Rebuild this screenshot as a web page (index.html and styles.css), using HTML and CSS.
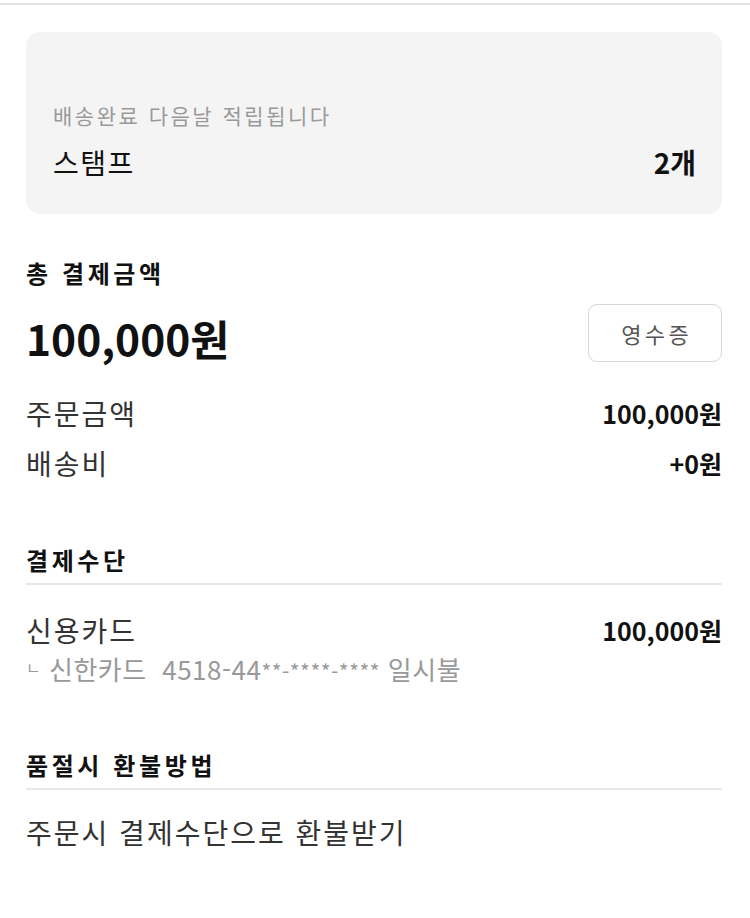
FILE: index.html
```html
<!DOCTYPE html>
<html lang="ko">
<head>
<meta charset="utf-8">
<link rel="stylesheet" href="styles.css">
</head>
<body>
<div class="topline"></div>
<main class="page">
  <section class="stamp-box">
    <p class="stamp-note">배송완료 다음날 적립됩니다</p>
    <div class="stamp-row">
      <span class="stamp-label">스탬프</span>
      <span class="stamp-count">2개</span>
    </div>
  </section>

  <section class="total">
    <h2 class="sec-title">총 결제금액</h2>
    <div class="total-row">
      <span class="total-amount">100,000원</span>
      <button class="receipt-btn">영수증</button>
    </div>
    <div class="line-row first">
      <span class="line-label">주문금액</span>
      <span class="line-value">100,000원</span>
    </div>
    <div class="line-row">
      <span class="line-label">배송비</span>
      <span class="line-value">+0원</span>
    </div>
  </section>

  <section class="block">
    <h2 class="sec-title ruled">결제수단</h2>
    <div class="line-row pay">
      <span class="line-label">신용카드</span>
      <span class="line-value">100,000원</span>
    </div>
    <p class="pay-detail"><span class="corner">ㄴ</span> 신한카드&nbsp;&nbsp;4518-44<span class="mask">**-****-****</span> 일시불</p>
  </section>

  <section class="block refund">
    <h2 class="sec-title ruled">품절시 환불방법</h2>
    <p class="refund-text">주문시 결제수단으로 환불받기</p>
  </section>
</main>
</body>
</html>
```

FILE: styles.css
```css
html, body {
  margin: 0;
  padding: 0;
  background: #fff;
}
body {
  font-family: "Noto Sans CJK KR", "Noto Sans", sans-serif;
  color: #111;
}
.topline {
  margin-top: 3px;
  height: 2px;
  background: #e2e2e2;
}
.page {
  padding: 0 28px 0 26px;
}
.stamp-box {
  margin-top: 27px;
  background: #f4f4f4;
  border-radius: 14px;
  padding: 70px 26px 35px 27px;
}
.stamp-note {
  margin: 0;
  font-size: 21px;
  line-height: 26px;
  letter-spacing: 2.5px;
  color: #999;
}
.stamp-row {
  margin-top: 17px;
  display: flex;
  justify-content: space-between;
  align-items: center;
  line-height: 34px;
}
.stamp-label {
  font-size: 28px;
  letter-spacing: 1.5px;
  color: #111;
}
.stamp-count {
  font-size: 28px;
  font-weight: 700;
}
.total {
  margin-top: 45px;
}
.sec-title {
  margin: 0;
  font-size: 24px;
  line-height: 28px;
  letter-spacing: 3.6px;
  font-weight: 700;
  color: #111;
}
.total-row {
  margin-top: 17px;
  display: flex;
  justify-content: space-between;
  align-items: flex-end;
}
.total-amount {
  font-size: 42.5px;
  line-height: 44px;
  font-weight: 700;
  margin-bottom: 2px;
}
.receipt-btn {
  width: 134px;
  height: 58px;
  border: 1px solid #d8d8d8;
  border-radius: 9px;
  background: #fff;
  font-family: inherit;
  font-size: 22px;
  letter-spacing: 3.5px;
  text-indent: 3.5px;
  color: #555;
  padding: 0;
}
.line-row {
  display: flex;
  justify-content: space-between;
  align-items: center;
  line-height: 34px;
  margin-top: 16px;
}
.line-row.first {
  margin-top: 34px;
}
.line-label {
  font-size: 28px;
  letter-spacing: 2px;
  color: #333;
}
.line-value {
  font-size: 25px;
  font-weight: 700;
  color: #111;
}
.block {
  margin-top: 66px;
}
.sec-title.ruled {
  padding-bottom: 9px;
  border-bottom: 2px solid #e8e8e8;
}
.line-row.pay {
  margin-top: 28px;
}
.pay-detail {
  margin: 5px 0 0;
  font-size: 26px;
  line-height: 30px;
  letter-spacing: 0.5px;
  color: #999;
}
.corner {
  font-size: 16px;
  vertical-align: 6px;
}
.mask {
  font-size: 21px;
}
.refund {
  margin-top: 65px;
}
.refund-text {
  margin: 25px 0 0;
  font-size: 28px;
  line-height: 34px;
  letter-spacing: 2px;
  color: #333;
}
```
